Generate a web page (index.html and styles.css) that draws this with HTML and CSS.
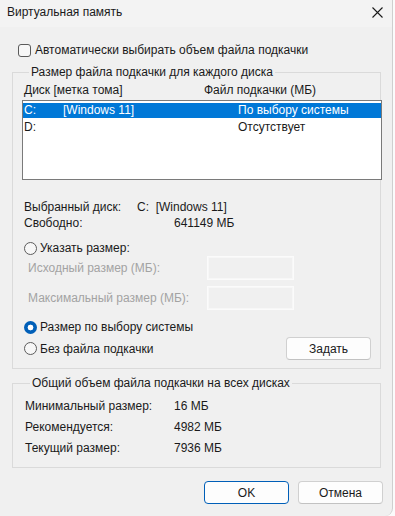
FILE: index.html
```html
<!DOCTYPE html>
<html lang="ru">
<head>
    <meta charset="UTF-8">
    <title>Виртуальная память</title>
    <link rel="stylesheet" href="styles.css">
</head>
<body>
    <div class="window">
        <div class="titlebar">
            <span class="title">Виртуальная память</span>
            <svg class="close" width="11" height="11" viewBox="0 0 11 11">
                <path d="M0.5 0.5 L10.5 10.5 M10.5 0.5 L0.5 10.5" stroke="#1a1a1a" stroke-width="1.1" fill="none"/>
            </svg>
        </div>

        <div class="dialog">
            <div class="check-row">
                <span class="checkbox"></span>
                <span>Автоматически выбирать объем файла подкачки</span>
            </div>

            <fieldset class="group group-disks">
                <legend>Размер файла подкачки для каждого диска</legend>
                <div class="list-head">
                    <span class="col-disk">Диск [метка тома]</span>
                    <span>Файл подкачки (МБ)</span>
                </div>
                <div class="listbox">
                    <div class="list-row selected">
                        <span>C:</span>
                        <span>[Windows 11]</span>
                        <span>По выбору системы</span>
                    </div>
                    <div class="list-row">
                        <span>D:</span>
                        <span></span>
                        <span>Отсутствует</span>
                    </div>
                </div>

                <div class="info-row first">
                    <span class="info-label short">Выбранный диск:</span>
                    <span>C:&nbsp; [Windows 11]</span>
                </div>
                <div class="info-row">
                    <span class="info-label">Свободно:</span>
                    <span>641149 МБ</span>
                </div>

                <div class="radio-row gap-top">
                    <span class="radio"></span>
                    <span>Указать размер:</span>
                </div>
                <div class="size-row">
                    <span class="size-label">Исходный размер (МБ):</span>
                    <span class="size-input"></span>
                </div>
                <div class="size-row">
                    <span class="size-label">Максимальный размер (МБ):</span>
                    <span class="size-input"></span>
                </div>

                <div class="radio-row gap-top">
                    <span class="radio checked"></span>
                    <span>Размер по выбору системы</span>
                </div>
                <div class="radio-row last">
                    <span class="radio"></span>
                    <span>Без файла подкачки</span>
                    <button class="btn btn-set">Задать</button>
                </div>
            </fieldset>

            <fieldset class="group group-total">
                <legend>Общий объем файла подкачки на всех дисках</legend>
                <div class="total-row">
                    <span class="info-label">Минимальный размер:</span>
                    <span>16 МБ</span>
                </div>
                <div class="total-row">
                    <span class="info-label">Рекомендуется:</span>
                    <span>4982 МБ</span>
                </div>
                <div class="total-row">
                    <span class="info-label">Текущий размер:</span>
                    <span>7936 МБ</span>
                </div>
            </fieldset>

            <div class="footer">
                <button class="btn btn-default">OK</button>
                <button class="btn">Отмена</button>
            </div>
        </div>
    </div>
</body>
</html>
```

FILE: styles.css
```css
:root {
    --window-bg: #f0f0f0;
    --title-bg: #f3f3f3;
    --group-border: #dadada;
    --text-color: #1a1a1a;
    --disabled-text: #a3a3a3;
    --accent: #005fb8;
    --selection: #0078d7;
}

body {
    margin: 0;
    background: #fbfbfb;
    font-family: 'Liberation Sans', Arial, sans-serif;
    font-size: 12px;
    color: var(--text-color);
}

.window {
    width: 392px;
    height: 516px;
    background: var(--window-bg);
    border-right: 1px solid #cfcfcf;
    border-bottom-right-radius: 8px;
    overflow: hidden;
}

.titlebar {
    height: 27px;
    background: var(--title-bg);
    display: flex;
    align-items: center;
    justify-content: space-between;
    padding: 0 9px 3px 7px;
    box-sizing: border-box;
}

.dialog {
    padding: 0 9px 0 12px;
}

.check-row {
    display: flex;
    align-items: center;
    height: 16px;
    margin-top: 15px;
    gap: 4px;
}

.checkbox {
    width: 11px;
    height: 11px;
    margin-left: 6px;
    border: 1px solid #5a5a5a;
    border-radius: 3px;
    background: #f7f7f7;
}

/* group boxes */
.group {
    margin: 6px 0 0 0;
    border: 1px solid var(--group-border);
    width: 369px;
    min-width: 0;
    box-sizing: border-box;
    padding: 2px 9px 8px 11px;
}

.group legend {
    padding: 0 2px;
    margin-left: 5px;
    line-height: 16px;
}

.list-head {
    display: flex;
    line-height: 16px;
}

.col-disk {
    width: 180px;
}

.listbox {
    width: 360px;
    height: 80px;
    box-sizing: border-box;
    margin: 2px 0 0 -2px;
    border: 1px solid #7a7a7a;
    background: #fff;
    padding-top: 2px;
}

.list-row {
    display: grid;
    grid-template-columns: 39px 175px 1fr;
    line-height: 15px;
    padding-left: 1px;
    margin-bottom: 2px;
}

.list-row.selected {
    background: var(--selection);
    color: #fff;
}

.info-row {
    display: flex;
    line-height: 16px;
}

.info-row.first {
    margin-top: 19px;
}

.info-label {
    width: 150px;
    flex-shrink: 0;
}

.info-label.short {
    width: 113px;
}

.radio-row {
    display: flex;
    align-items: center;
    height: 16px;
    gap: 3px;
}

.radio-row.gap-top {
    margin-top: 9px;
}

.radio-row.last {
    height: 23px;
    margin-top: 2px;
}

.radio {
    width: 11px;
    height: 11px;
    border: 1px solid #5c5c5c;
    border-radius: 50%;
    background: #f7f7f7;
    flex-shrink: 0;
}

.radio.checked {
    width: 13px;
    height: 13px;
    border: none;
    background: radial-gradient(circle, #fff 0 2.6px, var(--accent) 3.2px);
}

.size-row {
    display: flex;
    align-items: center;
    height: 24px;
    margin-bottom: 6px;
    color: var(--disabled-text);
}

.size-label {
    width: 179px;
    padding-left: 4px;
}

.size-input {
    width: 85px;
    height: 22px;
    border: 1px solid #fbfbfb;
    box-shadow: inset 0 0 0 1px #f7f7f7;
}

.btn {
    font-family: inherit;
    font-size: 12px;
    color: var(--text-color);
    width: 85px;
    height: 23px;
    background: #fdfdfd;
    border: 1px solid #d0d0d0;
    border-bottom-color: #c2c2c2;
    border-radius: 4px;
    padding: 0;
}

.btn-set {
    margin-left: auto;
}

.btn-default {
    border: 1px solid var(--accent);
}

.group-total {
    margin-top: 6px;
    padding: 5px 9px 8px 12px;
}

.total-row {
    display: flex;
    line-height: 21px;
}

.total-row .info-label {
    width: 149px;
}

.footer {
    display: flex;
    justify-content: flex-end;
    gap: 9px;
    margin-top: 13px;
}
```
